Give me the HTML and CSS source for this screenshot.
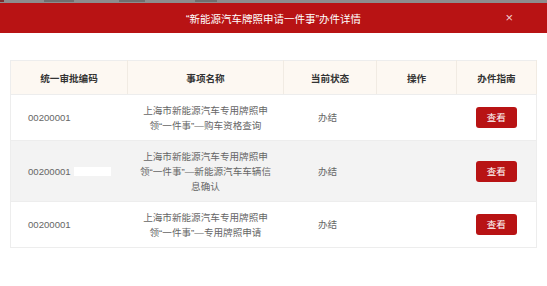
FILE: index.html
```html
<!DOCTYPE html>
<html lang="zh-CN">
<head>
<meta charset="utf-8">
<title>办件详情</title>
<link rel="stylesheet" href="styles.css">
</head>
<body>
<div class="backdrop-strip"><span class="strip-mark m1"></span><span class="strip-mark m2"></span><span class="strip-mark m3"></span><span class="strip-mark m4"></span></div>
<div class="dialog">
  <div class="dialog-header">
    <span class="dialog-title">“新能源汽车牌照申请一件事”办件详情</span>
    <span class="dialog-close">×</span>
  </div>
  <div class="dialog-body">
    <table class="grid">
      <colgroup>
        <col class="c1"><col class="c2"><col class="c3"><col class="c4"><col class="c5">
      </colgroup>
      <thead>
        <tr><th>统一审批编码</th><th>事项名称</th><th>当前状态</th><th>操作</th><th>办件指南</th></tr>
      </thead>
      <tbody>
        <tr>
          <td class="code">00200001<span class="mask"></span></td>
          <td class="name">上海市新能源汽车专用牌照申领“一件事”—购车资格查询</td>
          <td class="state">办结</td>
          <td></td>
          <td class="guide"><span class="btn">查看</span></td>
        </tr>
        <tr class="alt">
          <td class="code">00200001<span class="mask"></span></td>
          <td class="name">上海市新能源汽车专用牌照申领“一件事”—新能源汽车车辆信息确认</td>
          <td class="state">办结</td>
          <td></td>
          <td class="guide"><span class="btn">查看</span></td>
        </tr>
        <tr>
          <td class="code">00200001<span class="mask"></span></td>
          <td class="name">上海市新能源汽车专用牌照申领“一件事”—专用牌照申请</td>
          <td class="state">办结</td>
          <td></td>
          <td class="guide"><span class="btn">查看</span></td>
        </tr>
      </tbody>
    </table>
  </div>
</div>
</body>
</html>
```
FILE: styles.css
```css
html, body {
  margin: 0;
  padding: 0;
  background: #ffffff;
}
body {
  width: 547px;
  height: 286px;
  overflow: hidden;
  font-family: "Liberation Sans", "Noto Sans CJK SC", sans-serif;
}
.backdrop-strip {
  height: 3px;
  background: #8d8d8d;
  display: flex;
  gap: 0;
}
.strip-mark {
  height: 2px;
  background: #6f6f6f;
}
.m1 { width: 4px; background: #7a3030; }
.m2 { width: 30px; margin-left: 40px; }
.m3 { width: 26px; margin-left: 45px; }
.m4 { width: 22px; margin-left: 50px; }

.dialog-header {
  height: 30px;
  background: #b81314;
  display: flex;
  align-items: center;
  justify-content: center;
  position: relative;
  color: #ffffff;
}
.dialog-title {
  font-size: 10.5px;
  letter-spacing: 0;
}
.dialog-close {
  position: absolute;
  right: 34px;
  top: 7px;
  font-size: 13px;
  line-height: 16px;
  color: #f2d0d0;
}
.dialog-body {
  padding: 27px 11px 0 10px;
}
.grid {
  width: 526px;
  table-layout: fixed;
  border-collapse: collapse;
  border: 1px solid #ededed;
  font-size: 9.6px;
}
.c1 { width: 117px; }
.c2 { width: 156px; }
.c3 { width: 93px; }
.c4 { width: 80px; }
.c5 { width: 80px; }
.grid th {
  height: 33px;
  padding: 0;
  background: #fdf8f2;
  color: #333333;
  font-weight: bold;
  border-right: 1px solid #f1ebe3;
  border-bottom: 1px solid #ededed;
  text-align: center;
}
.grid td {
  padding: 7.5px 12px;
  line-height: 15px;
  color: #666666;
  text-align: center;
  vertical-align: middle;
  border-bottom: 1px solid #ededed;
}
.grid tr.alt td {
  background: #f3f3f3;
}
.grid td.code {
  text-align: left;
  padding-left: 17px;
  padding-right: 4px;
}
.mask {
  display: inline-block;
  width: 37px;
  height: 9px;
  margin-left: 3px;
  vertical-align: middle;
  background: #ffffff;
}
.grid td.state {
  padding-right: 17px;
}
.btn {
  display: inline-block;
  width: 41px;
  height: 21px;
  line-height: 21px;
  border-radius: 3px;
  background: #b81314;
  color: #ffffff;
  font-size: 9.6px;
}
```
